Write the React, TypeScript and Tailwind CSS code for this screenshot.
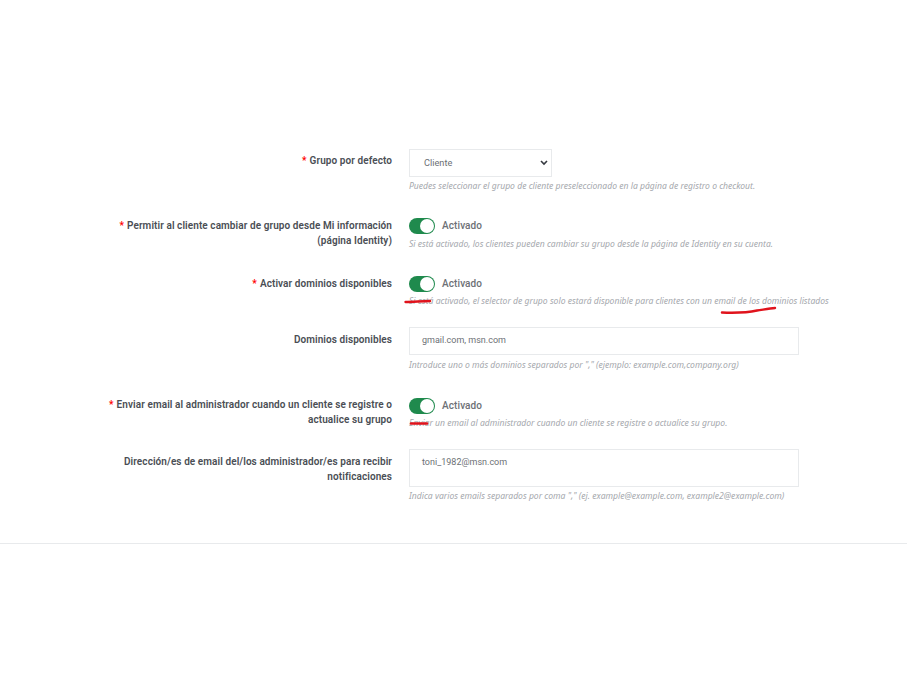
import React from "react";

const font = { fontFamily: '"Noto Sans", sans-serif' };
const roboto = { fontFamily: 'Roboto, sans-serif' };

function Star() {
  return <span className="text-[#f00] mr-[3px]">*</span>;
}

function Label({ req, children }: { req?: boolean; children: React.ReactNode }) {
  return (
    <div className="w-[392px] shrink-0 text-right text-[10px] leading-[14.5px] font-semibold tracking-[0.08px] text-[#4a4e54]" style={roboto}>
      {req && <Star />}
      {children}
    </div>
  );
}

function Help({ children }: { children: React.ReactNode }) {
  return <p className="text-[8.58px] leading-[12px] italic text-[#a5a8ad] whitespace-nowrap">{children}</p>;
}

function Toggle() {
  return (
    <div className="flex items-center h-4">
      <div className="w-[26px] h-4 rounded-full bg-[#1f8a4d] flex items-center justify-end pr-[1px]">
        <div className="w-[14px] h-[14px] rounded-full bg-white" />
      </div>
      <span className="ml-[7px] pb-[2px] text-[10px] tracking-[0.1px] font-medium text-[#6c7075]" style={roboto}>Activado</span>
    </div>
  );
}

function Row({ className, children }: { className: string; children: React.ReactNode }) {
  return <div className={`flex ${className}`}>{children}</div>;
}

export default function App() {
  return (
    <div className="relative w-[907px] h-[693px] bg-white overflow-hidden" style={font}>
      <div className="pt-[149px]">
        <Row className="h-[68px]">
          <div className="pt-[5px]"><Label req>Grupo por defecto</Label></div>
          <div className="ml-[17px]">
            <div className="w-[143px] h-[28px] border border-[#e8eaec] flex items-center justify-between pl-[14px] pr-[3px] text-[9.2px] text-[#6c7075]" style={roboto}>
              <span>Cliente</span>
              <svg width="8" height="6" viewBox="0 0 8 6" fill="none" stroke="#363a41" strokeWidth="1.6"><path d="M1 1l3 3 3-3" /></svg>
            </div>
            <div className="mt-[3px]"><Help>Puedes seleccionar el grupo de cliente preseleccionado en la página de registro o checkout.</Help></div>
          </div>
        </Row>
        <Row className="h-[58px] pt-[1px]">
          <div className="pt-[1px]"><Label req>Permitir al cliente cambiar de grupo desde Mi información<br />(página Identity)</Label></div>
          <div className="ml-[17px]">
            <Toggle />
            <div className="mt-[4px]"><Help>Si está activado, los clientes pueden cambiar su grupo desde la página de Identity en su cuenta.</Help></div>
          </div>
        </Row>
        <Row className="h-[52px] pt-[1px]">
          <div className="pt-[1px]"><Label req>Activar dominios disponibles</Label></div>
          <div className="ml-[17px]">
            <Toggle />
            <div className="mt-[3px]"><Help>Si está activado, el selector de grupo solo estará disponible para clientes con un email de los dominios listados</Help></div>
          </div>
        </Row>
        <Row className="h-[70px]">
          <div className="pt-[6px]"><Label>Dominios disponibles</Label></div>
          <div className="ml-[17px]">
            <div className="w-[390px] h-[28px] border border-[#e8eaec] flex items-center pl-[12px] text-[9px] text-[#6c7075]" style={roboto}>gmail.com, msn.com</div>
            <div className="mt-[4px]"><Help>Introduce uno o más dominios separados por "," (ejemplo: example.com,company.org)</Help></div>
          </div>
        </Row>
        <Row className="h-[52px]">
          <div className="pt-[1px]"><Label req>Enviar email al administrador cuando un cliente se registre o<br />actualice su grupo</Label></div>
          <div className="ml-[17px] pt-[1px]">
            <Toggle />
            <div className="mt-[3px]"><Help>Enviar un email al administrador cuando un cliente se registre o actualice su grupo.</Help></div>
          </div>
        </Row>
        <Row className="h-[94px]">
          <div className="pt-[6px]"><Label>Dirección/es de email del/los administrador/es para recibir<br />notificaciones</Label></div>
          <div className="ml-[17px]">
            <div className="w-[390px] h-[38px] border border-[#e8eaec] pl-[12px] pt-[5px] text-[9px] leading-[14px] text-[#6c7075]" style={roboto}>toni_1982@msn.com</div>
            <div className="mt-[3px]"><Help>Indica varios emails separados por coma "," (ej. example@example.com, example2@example.com)</Help></div>
          </div>
        </Row>
        <div className="h-px bg-[#e8eaec]" />
      </div>
      <svg className="absolute left-0 top-0" width="907" height="693" fill="none" stroke="#e0131c" strokeLinecap="round">
        <path d="M405.500 302 C412 301.500 422 301.500 430 301" strokeWidth="2.500" />
        <path d="M722 312.500 C735 313 748 312.500 757 310.500 C764 309.500 770 308.500 775 308" strokeWidth="2.500" />
        <path d="M411 423.500 L427 423.500" strokeWidth="2.500" />
      </svg>
    </div>
  );
}
